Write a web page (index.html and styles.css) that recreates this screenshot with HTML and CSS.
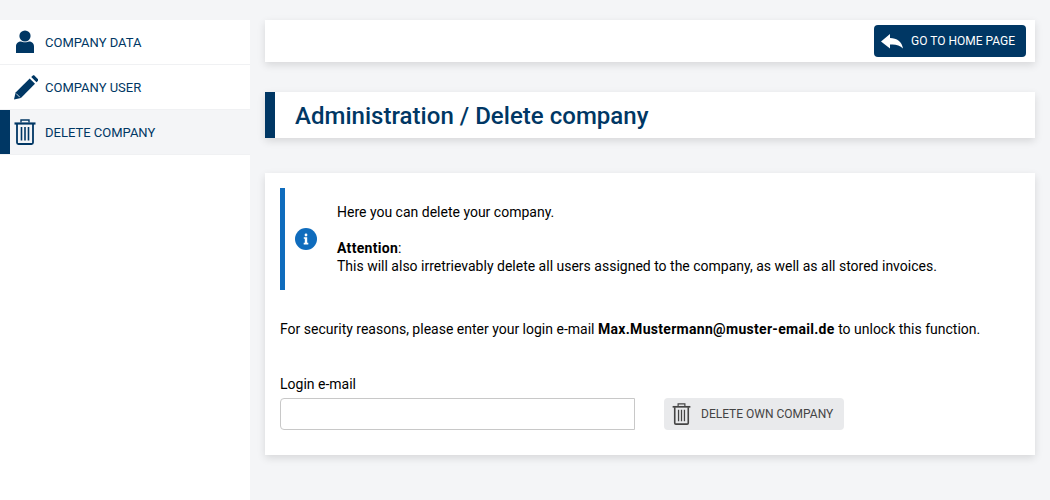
FILE: index.html
```html
<!DOCTYPE html>
<html lang="en">
<head>
<meta charset="utf-8">
<title>Delete company</title>
<link rel="stylesheet" href="styles.css">
</head>
<body>
<div class="layout">
  <nav class="sidebar">
    <a class="nav-item">
      <span class="nav-icon">
        <svg width="20" height="24" viewBox="0 0 20 24"><circle cx="10" cy="6" r="5.6" fill="currentColor"/><path d="M1 23V16.5C1 13.4 3.4 11.6 6 11.6C7.5 12.5 12.5 12.5 14 11.6C16.6 11.6 19 13.4 19 16.5V23Z" fill="currentColor"/></svg>
      </span>
      <span>COMPANY DATA</span>
    </a>
    <a class="nav-item">
      <span class="nav-icon">
        <svg width="25" height="25" viewBox="0 0 25 25"><path d="M1 24.5L2.6 17.6L16.7 3.5L22 8.8L7.9 22.9Z" fill="currentColor"/><path d="M18.2 2L19.6.7C20.2.1 21 .1 21.6.7L24.8 3.9C25.4 4.5 25.4 5.3 24.8 5.9L23.5 7.3Z" fill="currentColor"/><path d="M3.2 18.6L6.9 22.3" stroke="#fff" stroke-width=".8"/></svg>
      </span>
      <span>COMPANY USER</span>
    </a>
    <a class="nav-item active">
      <span class="nav-icon">
        <svg width="22" height="26" viewBox="0 0 22 26" fill="none" stroke="currentColor"><path d="M.5 4.5H21.5" stroke-width="2.2"/><path d="M7 3.5V1H15V3.5" stroke-width="1.4"/><path d="M3 5V23.5C3 24.3 3.6 25 4.4 25H17.6C18.4 25 19 24.3 19 23.5V5" stroke-width="1.8"/><path d="M7.5 8V21.5M11 8V21.5M14.5 8V21.5" stroke-width="1.6"/></svg>
      </span>
      <span>DELETE COMPANY</span>
    </a>
  </nav>
  <main class="content">
    <div class="topbar">
      <a class="btn btn-primary">
        <svg class="btn-back" width="22" height="15" viewBox="0 0 22 15"><path d="M0 7.5L9 0V4C16 4 21 8 22 14.5C19 11 14 10 9 10.5V14.5Z" fill="currentColor"/></svg>
        <span>GO TO HOME PAGE</span>
      </a>
    </div>
    <h1 class="page-title">Administration / Delete company</h1>
    <section class="card">
      <div class="notice">
        <span class="notice-icon">
          <svg width="22" height="22" viewBox="0 0 22 22"><circle cx="11" cy="11" r="11" fill="#0f6cbd"/><circle cx="11" cy="7" r="1.4" fill="#fff"/><path d="M8.8 9.3H12.2V14.8H13.3V16.4H8.7V14.8H9.8V10.7H8.8Z" fill="#fff"/></svg>
        </span>
        <div class="notice-text">
          <p>Here you can delete your company.</p>
          <p><strong>Attention</strong>:<br>This will also irretrievably delete all users assigned to the company, as well as all stored invoices.</p>
        </div>
      </div>
      <p class="security">For security reasons, please enter your login e-mail <strong>Max.Mustermann@muster-email.de</strong> to unlock this function.</p>
      <label class="field-label" for="email">Login e-mail</label>
      <div class="form-row">
        <input class="field-input" id="email" type="text">
        <a class="btn btn-disabled">
          <svg width="19" height="22" viewBox="0 0 22 26" fill="none" stroke="currentColor"><path d="M.5 4.5H21.5" stroke-width="2"/><path d="M7 3.5V1H15V3.5" stroke-width="1.4"/><path d="M3 5V23.5C3 24.3 3.6 25 4.4 25H17.6C18.4 25 19 24.3 19 23.5V5" stroke-width="1.9"/><path d="M7.5 8V21.5M11 8V21.5M14.5 8V21.5" stroke-width="1.5"/></svg>
          <span>DELETE OWN COMPANY</span>
        </a>
      </div>
    </section>
  </main>
</div>
</body>
</html>
```

FILE: styles.css
```css
* { box-sizing: border-box; }
html, body { margin: 0; height: 100%; overflow: hidden; }
body {
  background: #f4f5f7;
  font-family: Roboto, "Liberation Sans", sans-serif;
  font-size: 14px;
  color: #000;
}
.layout { display: flex; height: 500px; padding-top: 20px; }
.sidebar { width: 250px; height: 480px; background: #fff; flex: none; }
.nav-item {
  display: flex;
  align-items: center;
  height: 45px;
  padding-left: 45px;
  position: relative;
  border-bottom: 1px solid #f0f1f3;
  color: #003764;
  font-size: 13px;
}
.nav-icon {
  position: absolute;
  left: 0;
  top: 0;
  width: 50px;
  height: 44px;
  display: flex;
  align-items: center;
  justify-content: center;
}
.nav-item:nth-child(1) .nav-icon { padding-bottom: 1px; }
.nav-item.active { background: #f4f5f7; }
.nav-item.active::before {
  content: "";
  position: absolute;
  left: 0;
  top: 0;
  bottom: 0;
  width: 10px;
  background: #003764;
}
.content { margin-left: 15px; width: 770px; }
.topbar {
  height: 42px;
  background: #fff;
  box-shadow: 0 3px 8px rgba(0, 0, 0, .12);
  display: flex;
  justify-content: flex-end;
  align-items: center;
  padding-right: 9px;
}
.btn {
  display: inline-flex;
  align-items: center;
  height: 32px;
  border-radius: 4px;
  font-size: 12px;
}
.btn-primary {
  width: 152px;
  background: #003764;
  color: #fff;
  padding-left: 7px;
  gap: 8px;
}
.btn-back { margin-top: 1px; }
.page-title {
  margin: 30px 0 35px;
  height: 46px;
  line-height: 48px;
  background: #fff;
  border-left: 10px solid #003764;
  padding-left: 20px;
  color: #003764;
  font-size: 24px;
  font-weight: 500;
  letter-spacing: .03px;
  box-shadow: 0 3px 8px rgba(0, 0, 0, .12);
}
.card {
  height: 282px;
  background: #fff;
  padding: 15px;
  box-shadow: 0 3px 8px rgba(0, 0, 0, .12);
}
.notice {
  height: 102px;
  border-left: 5px solid #0f6cbd;
  display: flex;
  align-items: center;
  padding-left: 10px;
}
.notice-icon { width: 22px; height: 22px; flex: none; margin-right: 20px; display: flex; }
.notice-text { line-height: 18px; }
.notice-text p { margin: 0; }
.notice-text p + p { margin-top: 18px; }
strong { font-weight: 700; letter-spacing: .3px; }
.security { margin: 30px 0 0; line-height: 18px; }
.field-label { display: block; margin-top: 37px; line-height: 18px; }
.form-row { display: flex; margin-top: 5px; align-items: center; }
.field-input {
  width: 355px;
  height: 32px;
  border: 1px solid #c8c8c8;
  border-radius: 4px 0 0 4px;
  background: #fff;
  outline: 0;
}
.btn-disabled {
  margin-left: 29px;
  width: 180px;
  background: #e9eaec;
  color: #444;
  padding-left: 8px;
  gap: 10px;
}
```
